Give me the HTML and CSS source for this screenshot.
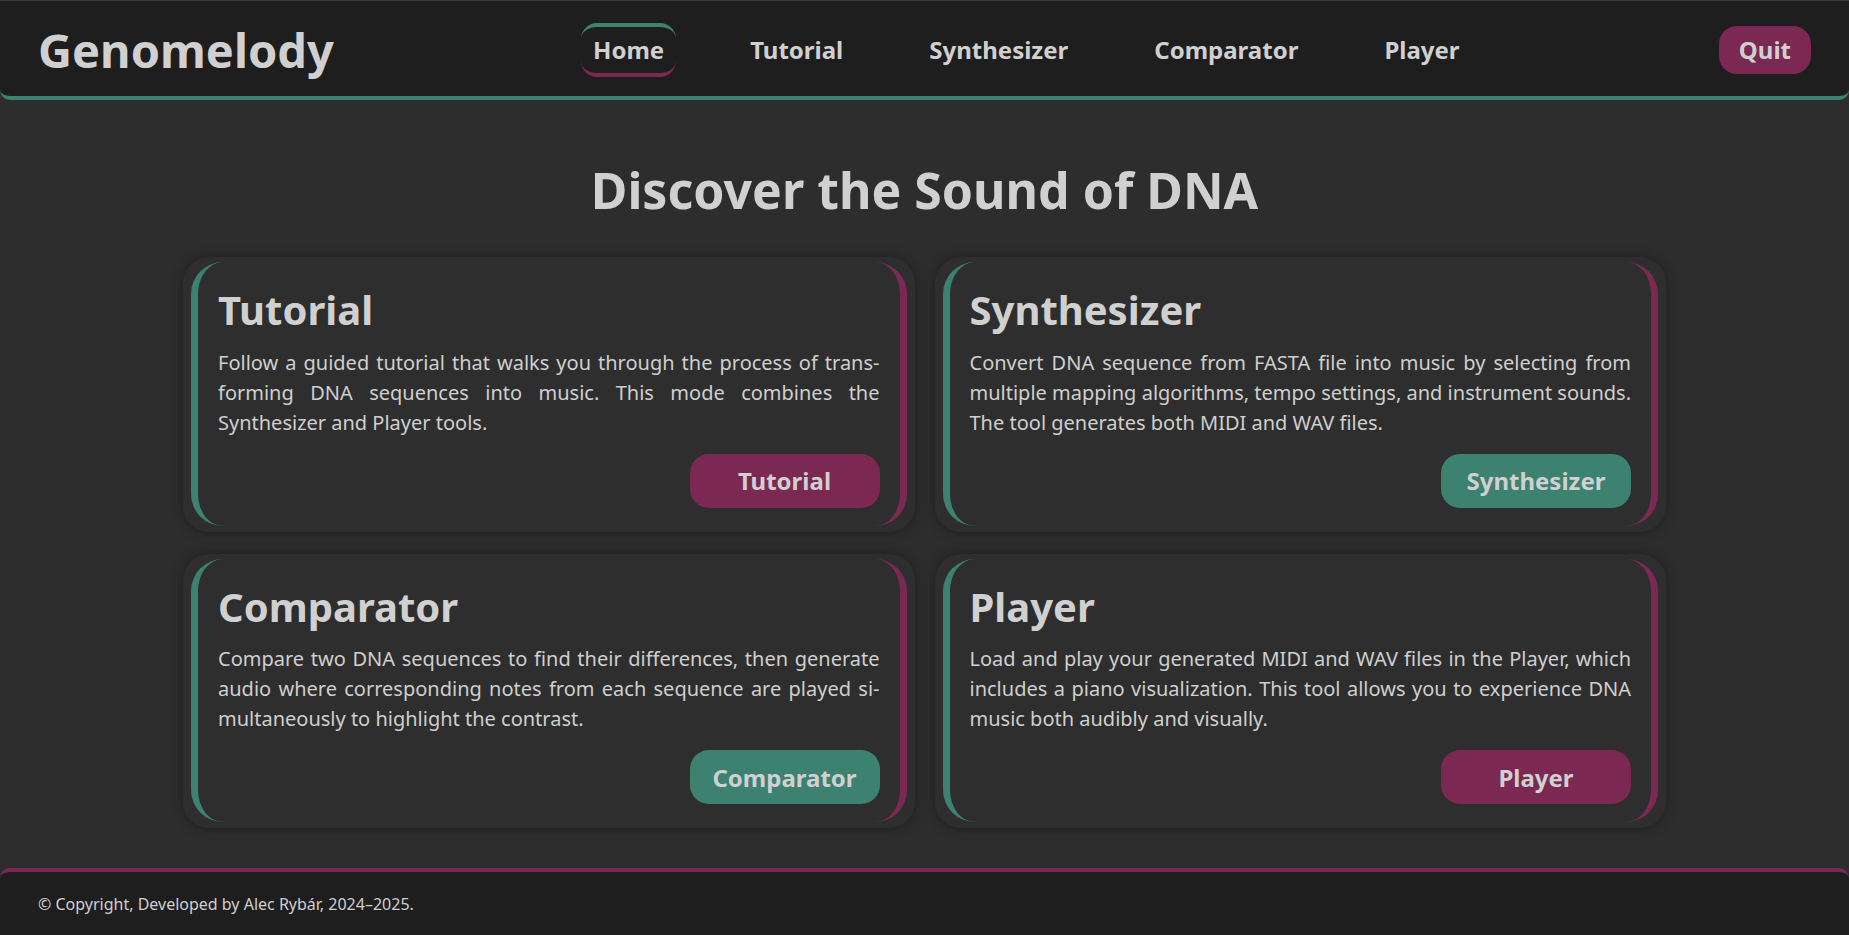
FILE: index.html
```html
<!DOCTYPE html>
<html lang="en">
<head>
<meta charset="utf-8">
<title>Genomelody</title>
<link rel="stylesheet" href="styles.css">
</head>
<body>
<header class="topbar">
  <div class="logo">Genomelody</div>
  <nav class="nav">
    <a class="nav-item active">Home</a>
    <a class="nav-item">Tutorial</a>
    <a class="nav-item">Synthesizer</a>
    <a class="nav-item">Comparator</a>
    <a class="nav-item">Player</a>
  </nav>
  <a class="quit">Quit</a>
</header>

<main class="main">
  <h1 class="headline">Discover the Sound of DNA</h1>
  <div class="grid">
    <div class="card">
      <div class="card-inner">
        <h2 class="card-title">Tutorial</h2>
        <p class="card-text">Follow a guided tutorial that walks you through the process of trans&shy;forming DNA sequences into music. This mode combines the Synthesizer and Player tools.</p>
        <div class="card-actions"><a class="btn btn-magenta">Tutorial</a></div>
      </div>
    </div>
    <div class="card">
      <div class="card-inner">
        <h2 class="card-title">Synthesizer</h2>
        <p class="card-text">Convert DNA sequence from FASTA file into music by selecting from multiple mapping algorithms, tempo settings, and instrument sounds. The tool generates both MIDI and WAV files.</p>
        <div class="card-actions"><a class="btn btn-teal">Synthesizer</a></div>
      </div>
    </div>
    <div class="card">
      <div class="card-inner">
        <h2 class="card-title">Comparator</h2>
        <p class="card-text">Compare two DNA sequences to find their differences, then generate audio where corresponding notes from each sequence are played si&shy;multaneously to highlight the contrast.</p>
        <div class="card-actions"><a class="btn btn-teal">Comparator</a></div>
      </div>
    </div>
    <div class="card">
      <div class="card-inner">
        <h2 class="card-title">Player</h2>
        <p class="card-text">Load and play your generated MIDI and WAV files in the Player, which includes a piano visualization. This tool allows you to experience DNA music both audibly and visually.</p>
        <div class="card-actions"><a class="btn btn-magenta">Player</a></div>
      </div>
    </div>
  </div>
</main>

<footer class="footer">
  <p class="copy">© Copyright, Developed by Alec Rybár, 2024–2025.</p>
</footer>
</body>
</html>
```

FILE: styles.css
```css
* { box-sizing: border-box; }

html, body {
  margin: 0;
  padding: 0;
}

body {
  background: #2d2d2d;
  color: #d0d0d0;
  font-family: "Noto Sans", "Open Sans", sans-serif;
  min-height: 100vh;
  display: flex;
  flex-direction: column;
}

.topbar {
  height: 100px;
  background: #1e1e1e;
  border-top: 1px solid #3b3b3b;
  border-bottom: 4px solid #3d8170;
  border-radius: 0 0 10px 10px;
  display: flex;
  align-items: center;
  justify-content: space-between;
  padding: 3px 38px 0;
}

.logo {
  font-size: 47px;
  font-weight: 700;
  color: #d0d0d0;
  line-height: 1.2;
}

.nav {
  display: flex;
  align-items: center;
  gap: 62px;
}

.nav-item {
  font-size: 24px;
  font-weight: 700;
  color: #d0d0d0;
  padding: 7px 12px;
  border-top: 4px solid transparent;
  border-bottom: 4px solid transparent;
  border-radius: 16px;
  line-height: 1.362;
}

.nav-item.active {
  border-top-color: #3d8170;
  border-bottom-color: #7b2952;
}

.quit {
  font-size: 24px;
  font-weight: 700;
  color: #d0d0d0;
  background: #7b2952;
  padding: 8px 20px;
  border-radius: 18px;
  line-height: 1.362;
}

.main {
  flex: 1;
  padding-top: 56px;
}

.headline {
  margin: 0 0 33px;
  text-align: center;
  font-size: 50px;
  font-weight: 700;
  line-height: 1.362;
  color: #d0d0d0;
}

.grid {
  width: 1483px;
  margin: 0 auto;
  display: grid;
  grid-template-columns: 1fr 1fr;
  gap: 22px 20px;
}

.card {
  background: #2e2e2e;
  border-radius: 26px;
  padding: 5px 8px 6px;
  box-shadow: 0 0 12px rgba(0, 0, 0, 0.35);
}

.card-inner {
  border-left: 7px solid #3d8170;
  border-right: 7px solid #7b2952;
  border-radius: 32px;
  padding: 21px 20px 18px;
}

.card-title {
  margin: 0 0 10px;
  font-size: 40px;
  font-weight: 700;
  line-height: 1.362;
  color: #d0d0d0;
}

.card-text {
  margin: 0 0 16px;
  font-size: 20px;
  line-height: 1.5;
  text-align: justify;
  hyphens: manual;
  color: #cfcfcf;
}

.card-actions {
  display: flex;
  justify-content: flex-end;
}

.btn {
  width: 190px;
  height: 54px;
  display: flex;
  align-items: center;
  justify-content: center;
  font-size: 24px;
  font-weight: 700;
  color: #d0d0d0;
  border-radius: 19px;
}

.btn-magenta { background: #7b2952; }
.btn-teal { background: #3d8170; }

.footer {
  background: #1e1e1e;
  border-top: 4px solid #7b2952;
  border-radius: 10px 10px 0 0;
  padding: 21px 38px 20px;
}

.copy {
  margin: 0;
  font-size: 16px;
  line-height: 22px;
  color: #cfcfcf;
}
```
